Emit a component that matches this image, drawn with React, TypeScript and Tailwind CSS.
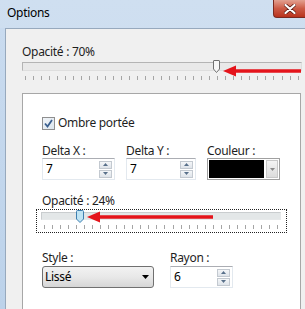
import React from "react";

const font = { fontFamily: '"Noto Sans", "Open Sans", Arial, sans-serif' };

function Ticks({ count }: { count: number }) {
  return (
    <div className="flex justify-between">
      {Array.from({ length: count }).map((_, i) => (
        <div key={i} className="w-px h-[4px] bg-[#a5a5a5]" />
      ))}
    </div>
  );
}

function Spinner() {
  return (
    <div className="flex flex-col gap-px mr-[2px]">
      {[0, 1].map((i) => (
        <div
          key={i}
          className="w-[13px] h-[8px] border border-[#c3c9d0] bg-gradient-to-b from-[#f4f6f8] to-[#dfe4ea] flex items-center justify-center"
        >
          <svg width="5" height="3" viewBox="0 0 5 3">
            {i === 0 ? <path d="M0 3 L2.5 0 L5 3 Z" fill="#58708a" /> : <path d="M0 0 L2.5 3 L5 0 Z" fill="#58708a" />}
          </svg>
        </div>
      ))}
    </div>
  );
}

function NumInput({ value, w }: { value: string; w: string }) {
  return (
    <div className={`${w} h-[22px] bg-white border border-[#e3e9ef] border-t-[#abadb3] flex items-center justify-between`}>
      <span className="pl-[3px] text-[12px] leading-[14px] text-black">{value}</span>
      <Spinner />
    </div>
  );
}

function RedArrow({ width }: { width: number }) {
  return (
    <svg width={width} height="12" viewBox={`0 0 ${width} 12`}>
      <path d={`M11 6 L${width} 6`} stroke="#e4141b" strokeWidth="3.5" />
      <path d="M0 6 L13 0.5 L13 11.5 Z" fill="#e4141b" />
    </svg>
  );
}

export default function App() {
  return (
    <div
      className="w-[305px] h-[309px] overflow-hidden relative bg-gradient-to-b from-[#cfdff0] to-[#c5d8ee] text-[#1e1e1e] tracking-[-0.3px]"
      style={font}
    >
      {/* title bar */}
      <div className="h-[28px] flex items-start">
        <span className="pl-[7px] pt-[5px] text-[12px] leading-[15px] text-black">Options</span>
      </div>
      <div className="absolute top-0 right-0 w-[32px] h-[18px] rounded-bl-[4px] border border-t-0 border-r-0 border-[#7a2a20] bg-gradient-to-b from-[#e2a090] via-[#cc5a45] to-[#b8321c] flex items-center justify-center">
        <svg width="12" height="10" viewBox="0 0 12 10">
          <path d="M1.5 1 L10.5 9 M10.5 1 L1.5 9" stroke="#5a1a12" strokeWidth="3.6" strokeLinecap="round" />
          <path d="M1.5 1 L10.5 9 M10.5 1 L1.5 9" stroke="#ffffff" strokeWidth="2.2" strokeLinecap="round" />
        </svg>
      </div>

      {/* body */}
      <div className="flex h-[281px]">
        <div className="w-[5px] shrink-0 bg-gradient-to-b from-[#c9dbef] to-[#bcd2ea]" />
        <div className="flex-1 min-w-0 border-l border-t border-[#97a9bd] bg-[#f0f0f0] pl-[16px] relative">
          <div className="mt-[15px] text-[12px] leading-[15px]">Opacité : 70%</div>
          {/* slider 1 */}
          <div className="mt-[3px] relative w-[280px]">
            <div className="h-[9px] bg-[#e9e9e9] border border-[#b4b4b4] border-b-[#dedede] border-r-[#dedede]" />
            <div className="absolute top-[-2px] left-[191px]">
              <svg width="7" height="13" viewBox="0 0 7 13">
                <path d="M0.5 1 Q0.5 0.5 1 0.5 L6 0.5 Q6.5 0.5 6.5 1 L6.5 9 L3.5 12.5 L0.5 9 Z" fill="#f7f7f7" stroke="#707070" />
              </svg>
            </div>
            <div className="mt-[5px] pl-[3px] pr-[3px]">
              <Ticks count={35} />
            </div>
          </div>
          <div className="absolute left-[217px] top-[36px]">
            <RedArrow width={78} />
          </div>

          {/* group box */}
          <div className="mt-[13px] w-[279px] h-[230px] bg-white border border-[#a7a7a7] pl-[19px] relative">
            <div className="mt-[22px] h-[14px] flex items-center gap-[3px]">
              <div className="w-[13px] h-[13px] border border-[#8f8f8f] bg-gradient-to-br from-[#f0f4f8] to-[#dde6ee] flex items-center justify-center">
                <svg width="9" height="9" viewBox="0 0 9 9">
                  <path d="M1 4.5 L3.5 7.5 L8 1" stroke="#3a5f8f" strokeWidth="1.8" fill="none" />
                </svg>
              </div>
              <span className="text-[12px] leading-[14px]">Ombre portée</span>
            </div>

            <div className="mt-[14px] flex gap-[11px]">
              <div className="flex flex-col">
                <span className="text-[12px] leading-[14px]">Delta X :</span>
                <NumInput value="7" w="w-[73px]" />
              </div>
              <div className="flex flex-col">
                <span className="text-[12px] leading-[14px]">Delta Y :</span>
                <NumInput value="7" w="w-[70px]" />
              </div>
              <div className="flex flex-col">
                <span className="text-[12px] leading-[14px]">Couleur :</span>
                <div className="w-[73px] h-[22px] border border-[#a0a0a0] bg-white flex items-stretch p-px gap-[2px]">
                  <div className="w-[55px] bg-black" />
                  <div className="flex-1 border border-[#c8c8c8] bg-gradient-to-b from-[#f4f4f4] to-[#dcdcdc] flex items-center justify-center">
                    <svg width="5" height="3" viewBox="0 0 5 3">
                      <path d="M0 0 L2.5 3 L5 0 Z" fill="#8a8a8a" />
                    </svg>
                  </div>
                </div>
              </div>
            </div>

            <div className="mt-[14px] text-[12px] leading-[14px]">Opacité : 24%</div>
            {/* slider 2 with focus rect */}
            <div className="ml-[-6px] mt-px w-[251px] h-[24px] border border-dotted border-[#222] relative pl-[4px] pr-[5px] pt-[2px]">
              <div className="h-[8px] bg-[#e3e7e8] border border-[#c9cdcf] border-b-[#e6e9ea] border-r-[#e6e9ea]" />
              <div className="absolute top-[0px] left-[39px]">
                <svg width="8" height="13" viewBox="0 0 8 13">
                  <path d="M0.5 1.5 Q0.5 0.5 1.5 0.5 L6.5 0.5 Q7.5 0.5 7.5 1.5 L7.5 9 L4 12.5 L0.5 9 Z" fill="#bfe4f4" stroke="#3d7fb0" />
                </svg>
              </div>
              <div className="mt-[5px] pl-[3px] pr-[3px]">
                <Ticks count={30} />
              </div>
              <div className="absolute left-[50px] top-[1px]">
                <RedArrow width={126} />
              </div>
            </div>

            <div className="mt-[18px] flex gap-[16px]">
              <div className="flex flex-col">
                <span className="text-[12px] leading-[14px]">Style :</span>
                <div className="mt-[1px] w-[112px] h-[22px] rounded-[3px] border border-[#707070] bg-gradient-to-b from-[#f2f2f2] via-[#e8e8e8] to-[#d6d6d6] flex items-center justify-between pl-[2px] pr-[4px]">
                  <span className="text-[12px] leading-[14px] text-black">Lissé</span>
                  <svg width="7" height="4" viewBox="0 0 7 4">
                    <path d="M0 0 L3.5 4 L7 0 Z" fill="#000" />
                  </svg>
                </div>
              </div>
              <div className="flex flex-col">
                <span className="text-[12px] leading-[14px]">Rayon :</span>
                <div className="mt-[1px]">
                  <NumInput value="6" w="w-[63px]" />
                </div>
              </div>
            </div>
          </div>
        </div>
      </div>
    </div>
  );
}
